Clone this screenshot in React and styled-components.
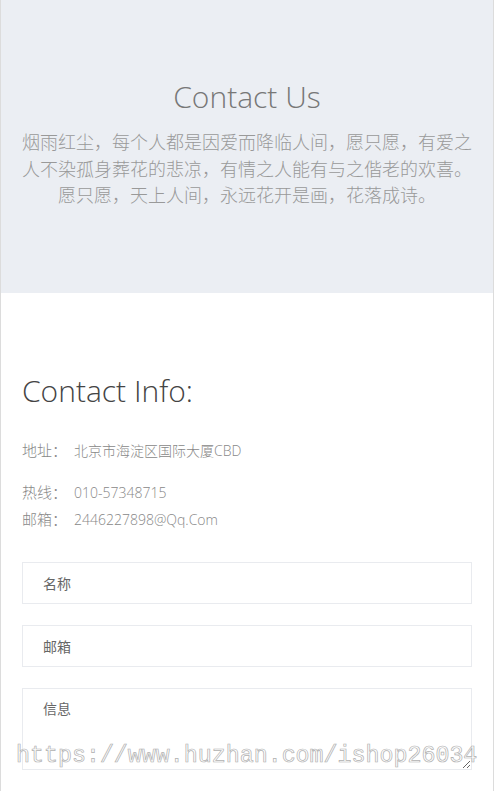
import React from 'react';
import styled, { createGlobalStyle } from 'styled-components';

const GlobalStyle = createGlobalStyle`
    html, body {
        margin: 0;
        padding: 0;
        background: #fff;
    }
    body {
        font-family: "Open Sans", "Noto Sans CJK SC", sans-serif;
    }
    * {
        box-sizing: border-box;
    }
`;

const Page = styled.div`
    position: relative;
    width: 494px;
    min-height: 791px;
    border-left: 1px solid #dcdcdc;
    border-right: 1px solid #dcdcdc;
    overflow: hidden;
`;

const Banner = styled.section`
    height: 293px;
    background: #ebeef3;
    padding: 79px 16px 0;
    text-align: center;
`;

const BannerTitle = styled.h1`
    margin: 0;
    font-size: 30px;
    line-height: 36px;
    font-weight: 300;
    color: #777;
`;

const BannerText = styled.p`
    margin: 14px 0 0;
    font-size: 18px;
    font-weight: 300;
    line-height: 26.5px;
    color: #999;
`;

const InfoSection = styled.section`
    padding: 80px 21px 0;
`;

const InfoTitle = styled.h2`
    margin: 0;
    font-size: 30px;
    line-height: 36px;
    font-weight: 300;
    color: #444;
`;

const DetailList = styled.ul`
    list-style: none;
    margin: 28px 0 0;
    padding: 0;
`;

const DetailItem = styled.li`
    display: flex;
    font-size: 14px;
    font-weight: 300;
    line-height: 27px;
    color: #888;
    margin-bottom: ${(p) => (p.spaced ? '15px' : '0')};
`;

const DetailKey = styled.span`
    width: 52px;
    flex-shrink: 0;
    font-size: 15px;
`;

const DetailValue = styled.span`
    color: #888;
`;

const Form = styled.form`
    display: flex;
    flex-direction: column;
    gap: 21px;
    margin-top: 29px;
`;

const Field = styled.input`
    width: 100%;
    height: 42px;
    border: 1px solid #e9ebef;
    padding: 0 20px;
    font-family: "Open Sans", "Noto Sans CJK SC", sans-serif;
    font-size: 14px;
    color: #555;
    outline: none;
    &::placeholder {
        color: #666;
    }
`;

const Message = styled.textarea`
    width: 100%;
    height: 82px;
    border: 1px solid #e9ebef;
    padding: 10px 20px;
    font-family: "Open Sans", "Noto Sans CJK SC", sans-serif;
    font-size: 14px;
    line-height: 20px;
    color: #555;
    outline: none;
    display: block;
    &::placeholder {
        color: #666;
    }
`;

const Watermark = styled.div`
    position: absolute;
    left: 15px;
    top: 738px;
    font-family: "Liberation Mono", "DejaVu Sans Mono", monospace;
    font-size: 23.3px;
    line-height: 36px;
    color: transparent;
    -webkit-text-stroke: 0.7px #b0b0b0;
    white-space: nowrap;
    pointer-events: none;
`;

const details = [
    { key: '地址：', value: '北京市海淀区国际大厦CBD', spaced: true },
    { key: '热线：', value: '010-57348715' },
    { key: '邮箱：', value: '2446227898@Qq.Com' },
];

const App = () => {
    return (
        <Page>
            <GlobalStyle />
            <Banner>
                <BannerTitle>Contact Us</BannerTitle>
                <BannerText>
                    烟雨红尘，每个人都是因爱而降临人间，愿只愿，有爱之人不染孤身葬花的悲凉，有情之人能有与之偕老的欢喜。愿只愿，天上人间，永远花开是画，花落成诗。
                </BannerText>
            </Banner>
            <InfoSection>
                <InfoTitle>Contact Info:</InfoTitle>
                <DetailList>
                    {details.map((item) => (
                        <DetailItem key={item.key} spaced={item.spaced}>
                            <DetailKey>{item.key}</DetailKey>
                            <DetailValue>{item.value}</DetailValue>
                        </DetailItem>
                    ))}
                </DetailList>
                <Form onSubmit={(e) => e.preventDefault()}>
                    <Field type="text" placeholder="名称" />
                    <Field type="email" placeholder="邮箱" />
                    <Message placeholder="信息" />
                </Form>
            </InfoSection>
            <Watermark>https://www.huzhan.com/ishop26034</Watermark>
        </Page>
    );
};

export default App;
